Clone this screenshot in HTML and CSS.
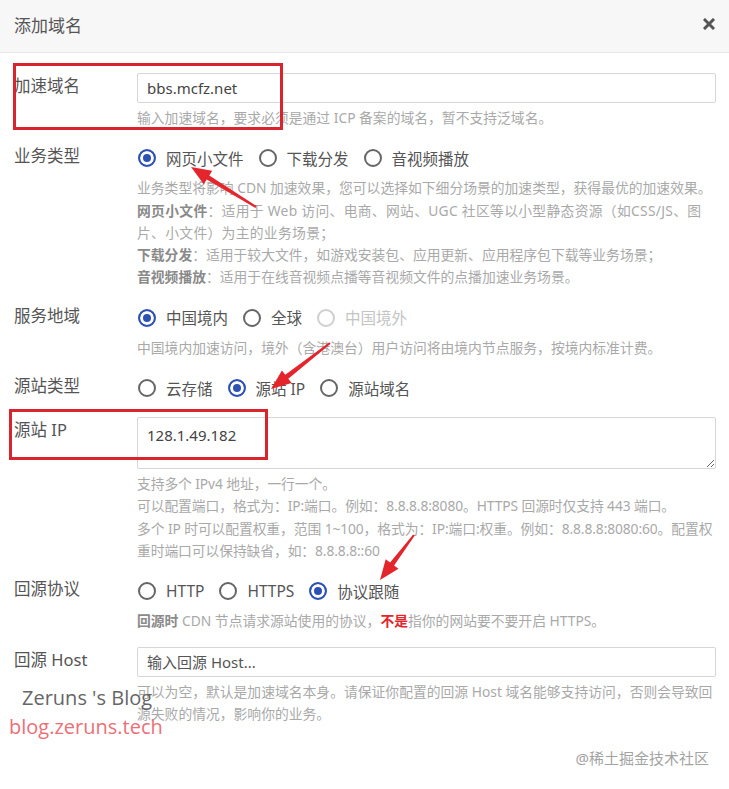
FILE: index.html
```html
<!DOCTYPE html>
<html lang="zh-CN">
<head>
    <meta charset="UTF-8">
    <meta name="viewport" content="width=device-width, initial-scale=1.0">
    <title>添加域名</title>
    <link rel="stylesheet" href="styles.css">
</head>
<body>
    <div class="modal">
        <div class="modal-header">
            <h3 class="modal-title">添加域名</h3>
            <button type="button" class="close" aria-label="关闭">
                <svg viewBox="0 0 12 12" width="12" height="12"><path d="M2 2L10 10M10 2L2 10" stroke="#555" stroke-width="3" stroke-linecap="square"/></svg>
            </button>
        </div>

        <form class="modal-body">
            <div class="form-row">
                <label class="form-label">加速域名</label>
                <div class="form-field">
                    <input type="text" class="text-input" value="bbs.mcfz.net">
                    <p class="help">输入加速域名，要求必须是通过 ICP 备案的域名，暂不支持泛域名。</p>
                </div>
            </div>

            <div class="form-row">
                <label class="form-label">业务类型</label>
                <div class="form-field">
                    <div class="radio-group">
                        <label class="radio"><input type="radio" name="type" checked>网页小文件</label>
                        <label class="radio"><input type="radio" name="type">下载分发</label>
                        <label class="radio"><input type="radio" name="type">音视频播放</label>
                    </div>
                    <p class="help">业务类型将影响 CDN 加速效果，您可以选择如下细分场景的加速类型，获得最优的加速效果。<br>
                        <span class="help-wide"><b>网页小文件</b>：适用于 Web 访问、电商、网站、UGC 社区等以小型静态资源（如CSS/JS、图片、小文件）为主的业务场景；</span><br>
                        <b>下载分发</b>：适用于较大文件，如游戏安装包、应用更新、应用程序包下载等业务场景；<br>
                        <b>音视频播放</b>：适用于在线音视频点播等音视频文件的点播加速业务场景。</p>
                </div>
            </div>

            <div class="form-row">
                <label class="form-label">服务地域</label>
                <div class="form-field">
                    <div class="radio-group">
                        <label class="radio"><input type="radio" name="area" checked>中国境内</label>
                        <label class="radio"><input type="radio" name="area">全球</label>
                        <label class="radio disabled"><input type="radio" name="area" disabled>中国境外</label>
                    </div>
                    <p class="help">中国境内加速访问，境外（含港澳台）用户访问将由境内节点服务，按境内标准计费。</p>
                </div>
            </div>

            <div class="form-row">
                <label class="form-label">源站类型</label>
                <div class="form-field">
                    <div class="radio-group">
                        <label class="radio"><input type="radio" name="origin">云存储</label>
                        <label class="radio"><input type="radio" name="origin" checked>源站 IP</label>
                        <label class="radio"><input type="radio" name="origin">源站域名</label>
                    </div>
                </div>
            </div>

            <div class="form-row">
                <label class="form-label">源站 IP</label>
                <div class="form-field">
                    <textarea class="text-input textarea">128.1.49.182</textarea>
                    <p class="help help-tight">支持多个 IPv4 地址，一行一个。<br>
                        可以配置端口，格式为：IP:端口。例如：8.8.8.8:8080。HTTPS 回源时仅支持 443 端口。<br>
                        多个 IP 时可以配置权重，范围 1~100，格式为：IP:端口:权重。例如：8.8.8.8:8080:60。配置权重时端口可以保持缺省，如：8.8.8.8::60</p>
                </div>
            </div>

            <div class="form-row">
                <label class="form-label">回源协议</label>
                <div class="form-field">
                    <div class="radio-group">
                        <label class="radio"><input type="radio" name="proto">HTTP</label>
                        <label class="radio"><input type="radio" name="proto">HTTPS</label>
                        <label class="radio"><input type="radio" name="proto" checked>协议跟随</label>
                    </div>
                    <p class="help"><b>回源时</b> CDN 节点请求源站使用的协议，<b class="warn">不是</b>指你的网站要不要开启 HTTPS。</p>
                </div>
            </div>

            <div class="form-row">
                <label class="form-label">回源 Host</label>
                <div class="form-field">
                    <input type="text" class="text-input" placeholder="输入回源 Host...">
                    <p class="help">可以为空，默认是加速域名本身。请保证你配置的回源 Host 域名能够支持访问，否则会导致回源失败的情况，影响你的业务。</p>
                </div>
            </div>
        </form>

        <!-- annotations on the screenshot -->
        <div class="mark mark-domain"></div>
        <div class="mark mark-ip"></div>
        <svg class="arrows" viewBox="0 0 729 789" width="729" height="789">
            <polygon points="256.5,206.1 209.3,175.4 212.2,170.7 191,167 203.8,184.3 206.7,179.6 255.5,207.9"/>
            <polygon points="330.6,343.8 288.3,378.7 291.7,383.0 271,389 281.9,370.4 285.3,374.7 329.4,342.2"/>
            <polygon points="414.8,535.6 394.1,565.5 398.5,568.8 380,580 385.7,559.2 390.1,562.5 413.2,534.4"/>
        </svg>
        <div class="watermark">
            <span class="wm-title">Zeruns 's Blog</span>
            <span class="wm-url">blog.zeruns.tech</span>
        </div>
        <div class="credit">@稀土掘金技术社区</div>
    </div>
</body>
</html>
```

FILE: styles.css
```css
body {
    margin: 0;
    padding: 0;
    background-color: #fff;
    color: #555;
    font-family: "Noto Sans", "Noto Sans CJK SC", sans-serif;
}

.modal {
    position: relative;
    width: 729px;
    height: 789px;
    overflow: hidden;
    background-color: #fff;
}

.modal-header {
    display: flex;
    justify-content: space-between;
    align-items: center;
    height: 52px;
    padding: 0 14px;
    background-color: #f7f7f7;
    border-bottom: 1px solid #e6e6e6;
}

.modal-title {
    margin: 0 0 3px;
    font-size: 17px;
    font-weight: normal;
    color: #555;
}

.close {
    display: flex;
    width: 12px;
    height: 12px;
    padding: 0;
    border: none;
    background: none;
    margin-bottom: 4px;
}

.modal-body {
    padding: 20px 13px 0 14px;
}

.form-row {
    display: flex;
    margin-bottom: 14px;
}

.form-label {
    flex: none;
    width: 123px;
    font-size: 16.5px;
    line-height: 26px;
    color: #555;
}

.form-field {
    flex: 1;
    min-width: 0;
}

.text-input {
    display: block;
    width: 100%;
    height: 30px;
    box-sizing: border-box;
    padding: 0 9px;
    border: 1px solid #d6d6d6;
    border-radius: 2px;
    font-family: inherit;
    font-size: 15px;
    color: #444;
    background-color: #fff;
}

.text-input::placeholder {
    color: #555;
}

.textarea {
    height: 52px;
    padding: 6px 9px;
    line-height: 22px;
    resize: vertical;
}

.radio-group {
    display: flex;
    align-items: center;
    gap: 15px;
    height: 30px;
    padding-left: 1px;
}

.radio {
    display: flex;
    align-items: center;
    gap: 10px;
    font-size: 15.5px;
    color: #555;
}

.radio input {
    appearance: none;
    margin: 0;
    width: 18px;
    height: 18px;
    box-sizing: border-box;
    border: 2px solid #666;
    border-radius: 50%;
    background-color: #fff;
}

.radio input:checked {
    border-color: #2d52b3;
    background-color: #2d52b3;
    box-shadow: inset 0 0 0 3px #fff;
}

.radio.disabled {
    color: #c4c4c4;
}

.radio input:disabled {
    border-color: #cfcfcf;
}

.help {
    margin: 4px 0 0;
    font-size: 13.8px;
    line-height: 22.3px;
    color: #a9a9a9;
}

.help-wide {
    letter-spacing: 0.3px;
}

.help-tight {
    letter-spacing: -0.1px;
}

.help b {
    color: #8a8a8a;
}

.help .warn {
    color: #e3262b;
}

.mark {
    position: absolute;
    border: 3px solid #d9232d;
}

.mark-domain {
    left: 13px;
    top: 63px;
    width: 264px;
    height: 61px;
}

.mark-ip {
    left: 9px;
    top: 409px;
    width: 253px;
    height: 45px;
}

.arrows {
    position: absolute;
    left: 0;
    top: 0;
    fill: #e4262c;
    pointer-events: none;
}

.watermark {
    position: absolute;
    left: 9px;
    top: 683px;
    display: flex;
    flex-direction: column;
    font-family: "Open Sans", sans-serif;
    font-size: 20px;
    line-height: 29px;
}

.wm-title {
    margin-left: 13px;
    color: #666;
}

.wm-url {
    color: #ec6f78;
}

.credit {
    position: absolute;
    right: 20px;
    top: 747px;
    font-size: 15px;
    line-height: 22px;
    color: #a3a3a3;
}
```
